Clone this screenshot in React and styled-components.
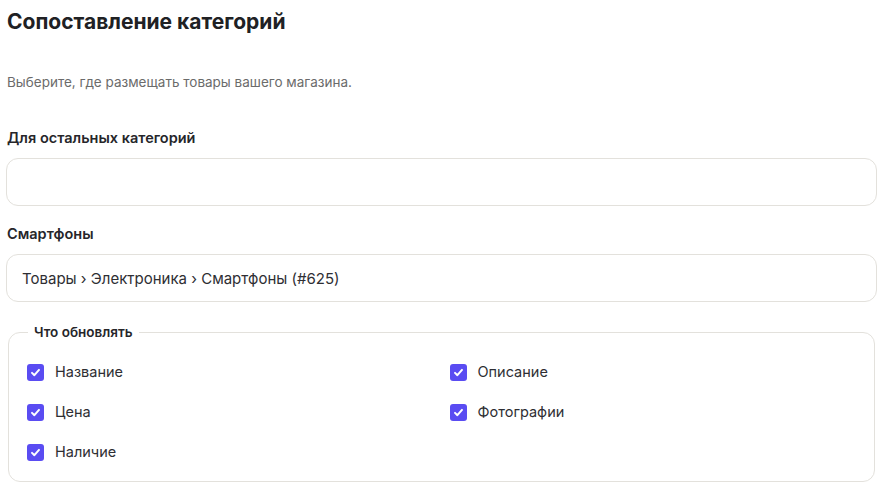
import React from 'react';
import styled, { createGlobalStyle } from 'styled-components';

const GlobalStyle = createGlobalStyle`
  body {
    margin: 0;
    background: #fff;
    font-family: Inter, "Noto Sans", sans-serif;
    color: #26262a;
  }
`

const Page = styled.div`
  padding: 6px 7px 0 6px;
`

const Title = styled.h1`
  margin: 0 0 0 1px;
  font-size: 21px;
  line-height: 32px;
  font-weight: 700;
  color: #202124;
`

const Description = styled.p`
  margin: 34px 0 0 1px;
  font-size: 13.5px;
  line-height: 20px;
  color: #6b6b6b;
`

const Label = styled.div`
  margin: ${p => p.top}px 0 10px 1px;
  font-size: 14.5px;
  line-height: 20px;
  font-weight: 600;
  color: #26262a;
`

const Field = styled.div`
  box-sizing: border-box;
  height: 48px;
  border: 1px solid #e3e1dc;
  border-radius: 12px;
  padding: 0 15px;
  display: flex;
  align-items: center;
  font-size: 15px;
  color: #2e2e33;
`

const Group = styled.fieldset`
  margin: 22px 2px 0 2px;
  border: 1px solid #e3e1dc;
  border-radius: 12px;
  padding: 22px 18px 19px 18px;
  display: grid;
  grid-template-columns: 1fr 1fr;
  column-gap: 16px;
  row-gap: 20px;
`

const Legend = styled.legend`
  padding: 0 6px;
  margin-left: 1px;
  font-size: 13.5px;
  font-weight: 600;
  color: #26262a;
`

const Option = styled.label`
  display: flex;
  align-items: center;
  gap: 11px;
  font-size: 14.5px;
  line-height: 20px;
  color: #2e2e33;
`

const Box = styled.span`
  width: 17px;
  height: 17px;
  border-radius: 3px;
  background: #5a4cf2;
  display: flex;
  align-items: center;
  justify-content: center;
  flex-shrink: 0;
`

const Check = () => (
  <Box>
    <svg width="11" height="11" viewBox="0 0 12 12">
      <path d="M2.2 6.4 L4.8 8.9 L9.8 3.2" fill="none" stroke="#fff" strokeWidth="2.2" strokeLinecap="round" strokeLinejoin="round" />
    </svg>
  </Box>
)

const options = [
  ['Название', 'Описание'],
  ['Цена', 'Фотографии'],
  ['Наличие', null],
]

export default function App() {
  return (
    <Page>
      <GlobalStyle />
      <Title>Сопоставление категорий</Title>
      <Description>Выберите, где размещать товары вашего магазина.</Description>
      <Label top={36}>Для остальных категорий</Label>
      <Field />
      <Label top={18}>Смартфоны</Label>
      <Field>Товары › Электроника › Смартфоны (#625)</Field>
      <Group>
        <Legend>Что обновлять</Legend>
        {options.flat().map((o, i) =>
          o ? (
            <Option key={i}>
              <Check />
              {o}
            </Option>
          ) : (
            <span key={i} />
          )
        )}
      </Group>
    </Page>
  )
}
